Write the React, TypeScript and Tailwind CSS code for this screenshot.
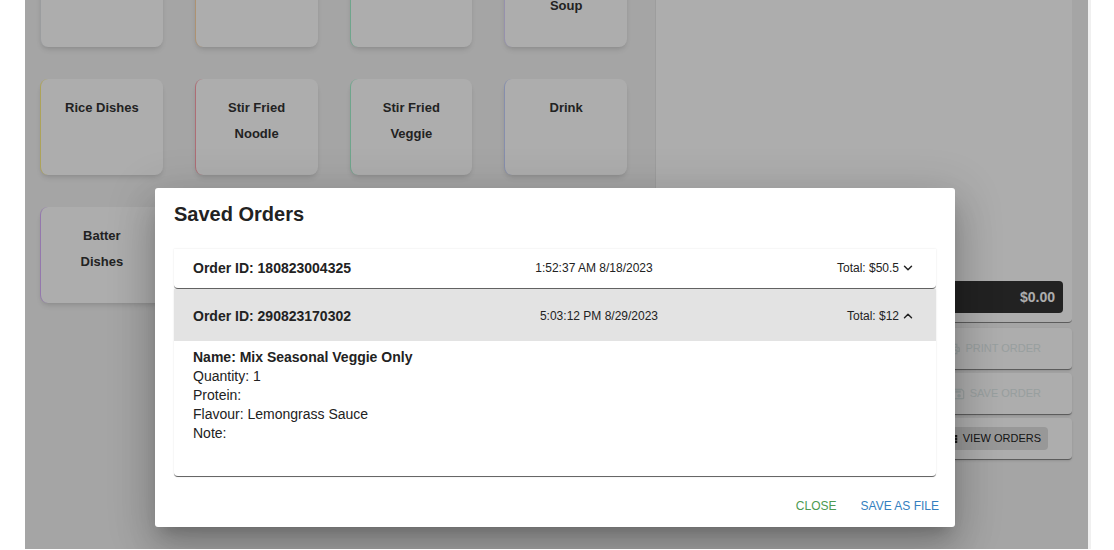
import React from 'react';
import { ChevronDown, ChevronUp } from 'lucide-react';
import { MdOutlineLocalPrintshop, MdOutlineSave, MdViewList } from 'react-icons/md';

const categories = [
  { name: '', edge: 'border-l-gray-200', inset: 'pt-4' },
  { name: '', edge: 'border-l-orange-200', inset: 'pt-4' },
  { name: '', edge: 'border-l-emerald-200', inset: 'pt-4' },
  { name: 'Soup', edge: 'border-l-violet-200', inset: 'pt-[42px]' },
  { name: 'Rice Dishes', edge: 'border-l-yellow-200', inset: 'pt-4' },
  { name: 'Stir Fried Noodle', edge: 'border-l-rose-300', inset: 'pt-4' },
  { name: 'Stir Fried Veggie', edge: 'border-l-emerald-200', inset: 'pt-4' },
  { name: 'Drink', edge: 'border-l-indigo-200', inset: 'pt-4' },
  { name: 'Batter Dishes', edge: 'border-l-purple-300', inset: 'pt-4' },
];

const orders = [
  { id: '180823004325', time: '1:52:37 AM 8/18/2023', total: '$50.5', open: false },
  { id: '290823170302', time: '5:03:12 PM 8/29/2023', total: '$12', open: true },
];

function CategoryCard({ name, edge, inset }: { name: string; edge: string; inset: string }) {
  return (
    <div className="py-4 pr-[17px] pl-[15px]">
      <button
        type="button"
        aria-label={name || 'Category'}
        className={`flex h-24 w-full items-start justify-center rounded-lg border-l bg-white px-5 text-[13px] leading-[26px] font-bold text-[#333] shadow-md ${edge} ${inset}`}
      >
        {name}
      </button>
    </div>
  );
}

function Paper({ children }: { children: React.ReactNode }) {
  return (
    <div className="flex h-[42px] items-center justify-end rounded border-b border-[#888] bg-white pr-6 shadow-sm">
      {children}
    </div>
  );
}

const actionClass = 'flex h-[23px] items-center gap-1 rounded-sm px-[7px] text-[11px]';

function OrderPanel() {
  return (
    <aside className="mr-4 ml-[11px] flex flex-col gap-[3px]">
      <div className="mb-[2px] flex h-[323px] flex-col justify-end rounded-b border-b border-l border-b-[#888] border-l-[#e8e8e8] bg-white px-[9px] pb-[9px]">
        <div className="flex h-8 items-center justify-end rounded bg-[#333] px-2 text-sm font-bold text-white">
          $0.00
        </div>
      </div>
      <Paper>
        <button type="button" disabled className={`${actionClass} text-[#dfeaea]`}>
          <MdOutlineLocalPrintshop size={14} />
          PRINT ORDER
        </button>
      </Paper>
      <Paper>
        <button type="button" disabled className={`${actionClass} text-[#dfeaea]`}>
          <MdOutlineSave size={14} />
          SAVE ORDER
        </button>
      </Paper>
      <Paper>
        <button type="button" className={`${actionClass} bg-[#e0e0e0] text-[#222]`}>
          <MdViewList size={14} />
          VIEW ORDERS
        </button>
      </Paper>
    </aside>
  );
}

function SavedOrders() {
  return (
    <section
      role="dialog"
      aria-modal="true"
      aria-labelledby="saved-orders-title"
      className="w-full max-w-[800px] rounded-[3px] bg-white px-[19px] pt-3 shadow-[0_11px_15px_-7px_rgba(0,0,0,0.2),0_24px_38px_3px_rgba(0,0,0,0.14),0_9px_46px_8px_rgba(0,0,0,0.12)]"
    >
      <h2 id="saved-orders-title" className="text-xl leading-7 font-bold">
        Saved Orders
      </h2>
      <div className="mt-[21px]">
        {orders.map((order) => (
          <div key={order.id} className="rounded-b-sm border-b border-[#666] shadow-[0_0_2px_rgba(0,0,0,0.12)]">
            <button
              type="button"
              aria-expanded={order.open}
              className={`flex w-full items-center justify-between px-[19px] ${order.open ? 'h-[52px] bg-[#e3e3e3] pt-[2px]' : 'h-[39px] pb-[2px]'}`}
            >
              <span className="text-sm font-bold">Order ID: {order.id}</span>
              <span className="text-xs">{order.time}</span>
              <span className="flex items-center gap-0.5 pr-0.5 text-xs">
                Total: {order.total}
                {order.open ? (
                  <ChevronUp size={14} strokeWidth={2.5} />
                ) : (
                  <ChevronDown size={14} strokeWidth={2.5} />
                )}
              </span>
            </button>
            {order.open && (
              <div className="px-[19px] pt-[7px] pb-[33px] text-sm leading-[19px]">
                <p className="font-bold">Name: Mix Seasonal Veggie Only</p>
                <p>Quantity: 1</p>
                <p>Protein:</p>
                <p>Flavour: Lemongrass Sauce</p>
                <p>Note:</p>
              </div>
            )}
          </div>
        ))}
      </div>
      <div className="-mr-[3px] flex h-[50px] items-center justify-end gap-6 pt-2 text-xs">
        <button type="button" className="text-[#4c9a52]">CLOSE</button>
        <button type="button" className="text-[#347fc0]">SAVE AS FILE</button>
      </div>
    </section>
  );
}

export default function App() {
  return (
    <div className="h-screen overflow-hidden bg-white pr-[23px] pb-px pl-[25px] font-['Liberation_Sans',Arial,sans-serif] text-[#222]">
      <div className="relative h-full overflow-hidden border-r-[3px] border-[#f0f0f0] bg-[#f4f4f4]">
        <main className="grid grid-cols-[619fr_444fr]">
          <div className="-mt-[65px] grid grid-cols-4 content-start">
            {categories.map((category, index) => (
              <CategoryCard key={index} {...category} />
            ))}
          </div>
          <OrderPanel />
        </main>
        <div className="absolute inset-0 flex items-start justify-center bg-black/32 pt-[188px] pr-[3px]">
          <SavedOrders />
        </div>
      </div>
    </div>
  );
}
